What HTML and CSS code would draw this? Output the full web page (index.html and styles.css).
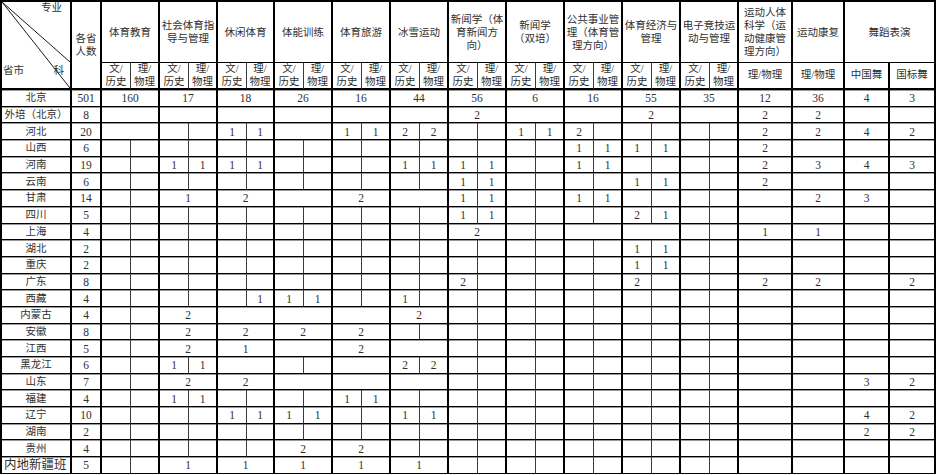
FILE: index.html
```html
<!DOCTYPE html>
<html lang="zh-CN">
<head>
<meta charset="utf-8">
<title>分省分专业招生计划</title>
<link rel="stylesheet" href="styles.css">
</head>
<body>
<div class="sheet">
  <div class="hd">
    <div class="diag">
      <svg class="diag-lines" viewBox="0 0 68 86" preserveAspectRatio="none"><line x1="0" y1="0" x2="68" y2="60" /><line x1="0" y1="0" x2="68" y2="86" /></svg>
      <span class="diag-top">专业</span>
      <span class="diag-bot"><span>省市</span><span>科</span></span>
    </div>
    <div class="t rs">各省<br>人数</div>
    <div class="m">体育教育</div>
    <div class="m">社会体育指<br>导与管理</div>
    <div class="m">休闲体育</div>
    <div class="m">体能训练</div>
    <div class="m">体育旅游</div>
    <div class="m">冰雪运动</div>
    <div class="m">新闻学（体<br>育新闻方<br>向）</div>
    <div class="m">新闻学<br>（双培）</div>
    <div class="m">公共事业管<br>理（体育管<br>理方向）</div>
    <div class="m">体育经济与<br>管理</div>
    <div class="m">电子竞技运<br>动与管理</div>
    <div class="t">运动人体<br>科学（运<br>动健康管<br>理方向）</div>
    <div class="t">运动康复</div>
    <div class="m">舞蹈表演</div>
  </div>
  <div class="hd sub">
    <div>文/<br>历史</div><div class="t">理/<br>物理</div>
    <div>文/<br>历史</div><div class="t">理/<br>物理</div>
    <div>文/<br>历史</div><div class="t">理/<br>物理</div>
    <div>文/<br>历史</div><div class="t">理/<br>物理</div>
    <div>文/<br>历史</div><div class="t">理/<br>物理</div>
    <div>文/<br>历史</div><div class="t">理/<br>物理</div>
    <div>文/<br>历史</div><div class="t">理/<br>物理</div>
    <div>文/<br>历史</div><div class="t">理/<br>物理</div>
    <div>文/<br>历史</div><div class="t">理/<br>物理</div>
    <div>文/<br>历史</div><div class="t">理/<br>物理</div>
    <div>文/<br>历史</div><div class="t">理/<br>物理</div>
    <div class="t">理/物理</div><div class="t">理/物理</div><div class="t">中国舞</div><div class="t">国标舞</div>
  </div>

  <div class="r">
    <div class="t nm">北京</div><div class="t">501</div>
    <div class="m">160</div><div class="m">17</div><div class="m">18</div><div class="m">26</div><div class="m">16</div><div class="m">44</div><div class="m">56</div><div class="m">6</div><div class="m">16</div><div class="m">55</div><div class="m">35</div>
    <div class="t">12</div><div class="t">36</div><div class="t">4</div><div class="t">3</div>
  </div>
  <div class="r">
    <div class="t nm">外培（北京）</div><div class="t">8</div>
    <div class="m"></div><div class="m"></div><div class="m"></div><div class="m"></div><div class="m"></div><div class="m"></div><div class="m">2</div><div class="m"></div><div class="m"></div><div class="m">2</div><div class="m"></div>
    <div class="t">2</div><div class="t">2</div><div class="t"></div><div class="t"></div>
  </div>
  <div class="r">
    <div class="t nm">河北</div><div class="t">20</div>
    <div class="m"></div>
    <div></div><div class="t"></div>
    <div>1</div><div class="t">1</div>
    <div class="m"></div>
    <div>1</div><div class="t">1</div>
    <div>2</div><div class="t">2</div>
    <div></div><div class="t"></div>
    <div>1</div><div class="t">1</div>
    <div>2</div><div class="t"></div>
    <div></div><div class="t"></div>
    <div></div><div class="t"></div>
    <div class="t">2</div><div class="t">2</div><div class="t">4</div><div class="t">2</div>
  </div>
  <div class="r">
    <div class="t nm">山西</div><div class="t">6</div>
    <div></div><div class="t"></div>
    <div></div><div class="t"></div>
    <div></div><div class="t"></div>
    <div></div><div class="t"></div>
    <div></div><div class="t"></div>
    <div></div><div class="t"></div>
    <div></div><div class="t"></div>
    <div></div><div class="t"></div>
    <div>1</div><div class="t">1</div>
    <div>1</div><div class="t">1</div>
    <div></div><div class="t"></div>
    <div class="t">2</div><div class="t"></div><div class="t"></div><div class="t"></div>
  </div>
  <div class="r">
    <div class="t nm">河南</div><div class="t">19</div>
    <div></div><div class="t"></div>
    <div>1</div><div class="t">1</div>
    <div>1</div><div class="t">1</div>
    <div></div><div class="t"></div>
    <div></div><div class="t"></div>
    <div>1</div><div class="t">1</div>
    <div>1</div><div class="t">1</div>
    <div></div><div class="t"></div>
    <div>1</div><div class="t">1</div>
    <div></div><div class="t"></div>
    <div></div><div class="t"></div>
    <div class="t">2</div><div class="t">3</div><div class="t">4</div><div class="t">3</div>
  </div>
  <div class="r">
    <div class="t nm">云南</div><div class="t">6</div>
    <div></div><div class="t"></div>
    <div></div><div class="t"></div>
    <div></div><div class="t"></div>
    <div></div><div class="t"></div>
    <div></div><div class="t"></div>
    <div></div><div class="t"></div>
    <div>1</div><div class="t">1</div>
    <div></div><div class="t"></div>
    <div></div><div class="t"></div>
    <div>1</div><div class="t">1</div>
    <div></div><div class="t"></div>
    <div class="t">2</div><div class="t"></div><div class="t"></div><div class="t"></div>
  </div>
  <div class="r">
    <div class="t nm">甘肃</div><div class="t">14</div>
    <div></div><div class="t"></div>
    <div class="m">1</div>
    <div class="m">2</div>
    <div class="m"></div>
    <div class="m">2</div>
    <div class="m"></div>
    <div>1</div><div class="t">1</div>
    <div></div><div class="t"></div>
    <div>1</div><div class="t">1</div>
    <div></div><div class="t"></div>
    <div></div><div class="t"></div>
    <div class="t"></div><div class="t">2</div><div class="t">3</div><div class="t"></div>
  </div>
  <div class="r">
    <div class="t nm">四川</div><div class="t">5</div>
    <div></div><div class="t"></div>
    <div></div><div class="t"></div>
    <div></div><div class="t"></div>
    <div></div><div class="t"></div>
    <div></div><div class="t"></div>
    <div></div><div class="t"></div>
    <div>1</div><div class="t">1</div>
    <div></div><div class="t"></div>
    <div></div><div class="t"></div>
    <div>2</div><div class="t">1</div>
    <div></div><div class="t"></div>
    <div class="t"></div><div class="t"></div><div class="t"></div><div class="t"></div>
  </div>
  <div class="r">
    <div class="t nm">上海</div><div class="t">4</div>
    <div></div><div class="t"></div>
    <div></div><div class="t"></div>
    <div></div><div class="t"></div>
    <div></div><div class="t"></div>
    <div></div><div class="t"></div>
    <div></div><div class="t"></div>
    <div class="m">2</div>
    <div></div><div class="t"></div>
    <div class="m"></div>
    <div class="m"></div>
    <div></div><div class="t"></div>
    <div class="t">1</div><div class="t">1</div><div class="t"></div><div class="t"></div>
  </div>
  <div class="r">
    <div class="t nm">湖北</div><div class="t">2</div>
    <div></div><div class="t"></div>
    <div></div><div class="t"></div>
    <div></div><div class="t"></div>
    <div></div><div class="t"></div>
    <div></div><div class="t"></div>
    <div></div><div class="t"></div>
    <div></div><div class="t"></div>
    <div></div><div class="t"></div>
    <div></div><div class="t"></div>
    <div>1</div><div class="t">1</div>
    <div></div><div class="t"></div>
    <div class="t"></div><div class="t"></div><div class="t"></div><div class="t"></div>
  </div>
  <div class="r">
    <div class="t nm">重庆</div><div class="t">2</div>
    <div></div><div class="t"></div>
    <div></div><div class="t"></div>
    <div></div><div class="t"></div>
    <div></div><div class="t"></div>
    <div></div><div class="t"></div>
    <div></div><div class="t"></div>
    <div></div><div class="t"></div>
    <div></div><div class="t"></div>
    <div></div><div class="t"></div>
    <div>1</div><div class="t">1</div>
    <div></div><div class="t"></div>
    <div class="t"></div><div class="t"></div><div class="t"></div><div class="t"></div>
  </div>
  <div class="r">
    <div class="t nm">广东</div><div class="t">8</div>
    <div></div><div class="t"></div>
    <div></div><div class="t"></div>
    <div></div><div class="t"></div>
    <div></div><div class="t"></div>
    <div></div><div class="t"></div>
    <div></div><div class="t"></div>
    <div>2</div><div class="t"></div>
    <div></div><div class="t"></div>
    <div></div><div class="t"></div>
    <div>2</div><div class="t"></div>
    <div></div><div class="t"></div>
    <div class="t">2</div><div class="t">2</div><div class="t"></div><div class="t">2</div>
  </div>
  <div class="r">
    <div class="t nm">西藏</div><div class="t">4</div>
    <div></div><div class="t"></div>
    <div></div><div class="t"></div>
    <div></div><div class="t">1</div>
    <div>1</div><div class="t">1</div>
    <div></div><div class="t"></div>
    <div>1</div><div class="t"></div>
    <div></div><div class="t"></div>
    <div></div><div class="t"></div>
    <div></div><div class="t"></div>
    <div></div><div class="t"></div>
    <div></div><div class="t"></div>
    <div class="t"></div><div class="t"></div><div class="t"></div><div class="t"></div>
  </div>
  <div class="r">
    <div class="t nm">内蒙古</div><div class="t">4</div>
    <div></div><div class="t"></div>
    <div class="m">2</div>
    <div class="m"></div>
    <div class="m"></div>
    <div class="m"></div>
    <div class="m">2</div>
    <div></div><div class="t"></div>
    <div></div><div class="t"></div>
    <div></div><div class="t"></div>
    <div></div><div class="t"></div>
    <div></div><div class="t"></div>
    <div class="t"></div><div class="t"></div><div class="t"></div><div class="t"></div>
  </div>
  <div class="r">
    <div class="t nm">安徽</div><div class="t">8</div>
    <div></div><div class="t"></div>
    <div class="m">2</div>
    <div class="m">2</div>
    <div class="m">2</div>
    <div class="m">2</div>
    <div></div><div class="t"></div>
    <div></div><div class="t"></div>
    <div></div><div class="t"></div>
    <div></div><div class="t"></div>
    <div></div><div class="t"></div>
    <div></div><div class="t"></div>
    <div class="t"></div><div class="t"></div><div class="t"></div><div class="t"></div>
  </div>
  <div class="r">
    <div class="t nm">江西</div><div class="t">5</div>
    <div></div><div class="t"></div>
    <div class="m">2</div>
    <div class="m">1</div>
    <div class="m"></div>
    <div class="m">2</div>
    <div class="m"></div>
    <div></div><div class="t"></div>
    <div></div><div class="t"></div>
    <div></div><div class="t"></div>
    <div></div><div class="t"></div>
    <div></div><div class="t"></div>
    <div class="t"></div><div class="t"></div><div class="t"></div><div class="t"></div>
  </div>
  <div class="r">
    <div class="t nm">黑龙江</div><div class="t">6</div>
    <div></div><div class="t"></div>
    <div>1</div><div class="t">1</div>
    <div class="m"></div>
    <div></div><div class="t"></div>
    <div class="m"></div>
    <div>2</div><div class="t">2</div>
    <div></div><div class="t"></div>
    <div></div><div class="t"></div>
    <div></div><div class="t"></div>
    <div></div><div class="t"></div>
    <div></div><div class="t"></div>
    <div class="t"></div><div class="t"></div><div class="t"></div><div class="t"></div>
  </div>
  <div class="r">
    <div class="t nm">山东</div><div class="t">7</div>
    <div></div><div class="t"></div>
    <div class="m">2</div>
    <div class="m">2</div>
    <div class="m"></div>
    <div class="m"></div>
    <div class="m"></div>
    <div></div><div class="t"></div>
    <div></div><div class="t"></div>
    <div></div><div class="t"></div>
    <div></div><div class="t"></div>
    <div></div><div class="t"></div>
    <div class="t"></div><div class="t"></div><div class="t">3</div><div class="t">2</div>
  </div>
  <div class="r">
    <div class="t nm">福建</div><div class="t">4</div>
    <div></div><div class="t"></div>
    <div>1</div><div class="t">1</div>
    <div></div><div class="t"></div>
    <div></div><div class="t"></div>
    <div>1</div><div class="t">1</div>
    <div></div><div class="t"></div>
    <div></div><div class="t"></div>
    <div></div><div class="t"></div>
    <div></div><div class="t"></div>
    <div></div><div class="t"></div>
    <div></div><div class="t"></div>
    <div class="t"></div><div class="t"></div><div class="t"></div><div class="t"></div>
  </div>
  <div class="r">
    <div class="t nm">辽宁</div><div class="t">10</div>
    <div></div><div class="t"></div>
    <div></div><div class="t"></div>
    <div>1</div><div class="t">1</div>
    <div>1</div><div class="t">1</div>
    <div></div><div class="t"></div>
    <div>1</div><div class="t">1</div>
    <div></div><div class="t"></div>
    <div></div><div class="t"></div>
    <div></div><div class="t"></div>
    <div></div><div class="t"></div>
    <div></div><div class="t"></div>
    <div class="t"></div><div class="t"></div><div class="t">4</div><div class="t">2</div>
  </div>
  <div class="r">
    <div class="t nm">湖南</div><div class="t">2</div>
    <div></div><div class="t"></div>
    <div></div><div class="t"></div>
    <div></div><div class="t"></div>
    <div></div><div class="t"></div>
    <div></div><div class="t"></div>
    <div></div><div class="t"></div>
    <div></div><div class="t"></div>
    <div></div><div class="t"></div>
    <div></div><div class="t"></div>
    <div></div><div class="t"></div>
    <div></div><div class="t"></div>
    <div class="t"></div><div class="t"></div><div class="t">2</div><div class="t">2</div>
  </div>
  <div class="r">
    <div class="t nm">贵州</div><div class="t">4</div>
    <div></div><div class="t"></div>
    <div></div><div class="t"></div>
    <div></div><div class="t"></div>
    <div class="m">2</div>
    <div class="m">2</div>
    <div></div><div class="t"></div>
    <div></div><div class="t"></div>
    <div></div><div class="t"></div>
    <div></div><div class="t"></div>
    <div></div><div class="t"></div>
    <div></div><div class="t"></div>
    <div class="t"></div><div class="t"></div><div class="t"></div><div class="t"></div>
  </div>
  <div class="r">
    <div class="t nm wide">内地新疆班</div><div class="t">5</div>
    <div></div><div class="t"></div>
    <div class="m">1</div>
    <div class="m">1</div>
    <div class="m">1</div>
    <div class="m">1</div>
    <div class="m">1</div>
    <div></div><div class="t"></div>
    <div></div><div class="t"></div>
    <div></div><div class="t"></div>
    <div></div><div class="t"></div>
    <div></div><div class="t"></div>
    <div class="t"></div><div class="t"></div><div class="t"></div><div class="t"></div>
  </div>
</div>
</body>
</html>
```

FILE: styles.css
```css
* {
  box-sizing: border-box;
}

html, body {
  margin: 0;
  padding: 0;
  background: #ffffff;
}

.sheet {
  display: grid;
  width: max-content;
  grid-template-columns:
    70px 30px
    29px 29px 29px 29px
    29px 28px
    29px 29px 29px 29px 29px 29px 29px 29px
    29px 29px 29px 29px 29px 29px 29px 29px
    54px 52px 45px 46px;
  grid-template-rows: 61px 27px repeat(23, 16.7px);
  border-top: 2px solid #000;
  border-left: 2px solid #000;
  font-family: "Liberation Serif", "Noto Sans CJK SC", serif;
  color: #303030;
  background: #fff;
}

.hd,
.r {
  display: contents;
}

.hd > div,
.r > div {
  display: flex;
  align-items: center;
  justify-content: center;
  text-align: center;
  white-space: nowrap;
  overflow: hidden;
  border-right: 1px solid #3a3a3a;
  border-bottom: 1px solid #000;
}

.hd > div {
  font-size: 10.5px;
  line-height: 13px;
}

.sub > div {
  border-bottom: 2px solid #000;
  line-height: 12.5px;
}

.r > div {
  font-size: 11.5px;
  line-height: 14px;
  padding-top: 1px;
  box-shadow: inset 0 1px 0 #9a9a9a;
}

.hd > .t,
.r > .t,
.hd > .m,
.r > .m {
  border-right: 2px solid #000;
}

.m {
  grid-column: span 2;
}

.rs {
  grid-row: span 2;
  border-bottom: 2px solid #000 !important;
}

.nm {
  font-size: 10.5px !important;
}

.r > .wide {
  font-size: 12.5px !important;
  justify-content: flex-start;
  padding-left: 2px;
}

.hd > .diag {
  grid-row: span 2;
  position: relative;
  display: flex;
  flex-direction: column;
  justify-content: space-between;
  align-items: stretch;
  padding: 0 6px 11px 1px;
  border-right: 2px solid #000;
  border-bottom: 2px solid #000;
}

.diag-lines {
  position: absolute;
  top: 0;
  left: 0;
  width: 100%;
  height: 100%;
}

.diag-lines line {
  stroke: #1a1a1a;
  stroke-width: 1;
  vector-effect: non-scaling-stroke;
}

.diag-top {
  position: relative;
  text-align: right;
  line-height: 12px;
  padding-right: 2px;
}

.diag-bot {
  position: relative;
  display: flex;
  justify-content: space-between;
  line-height: 12px;
}
```
